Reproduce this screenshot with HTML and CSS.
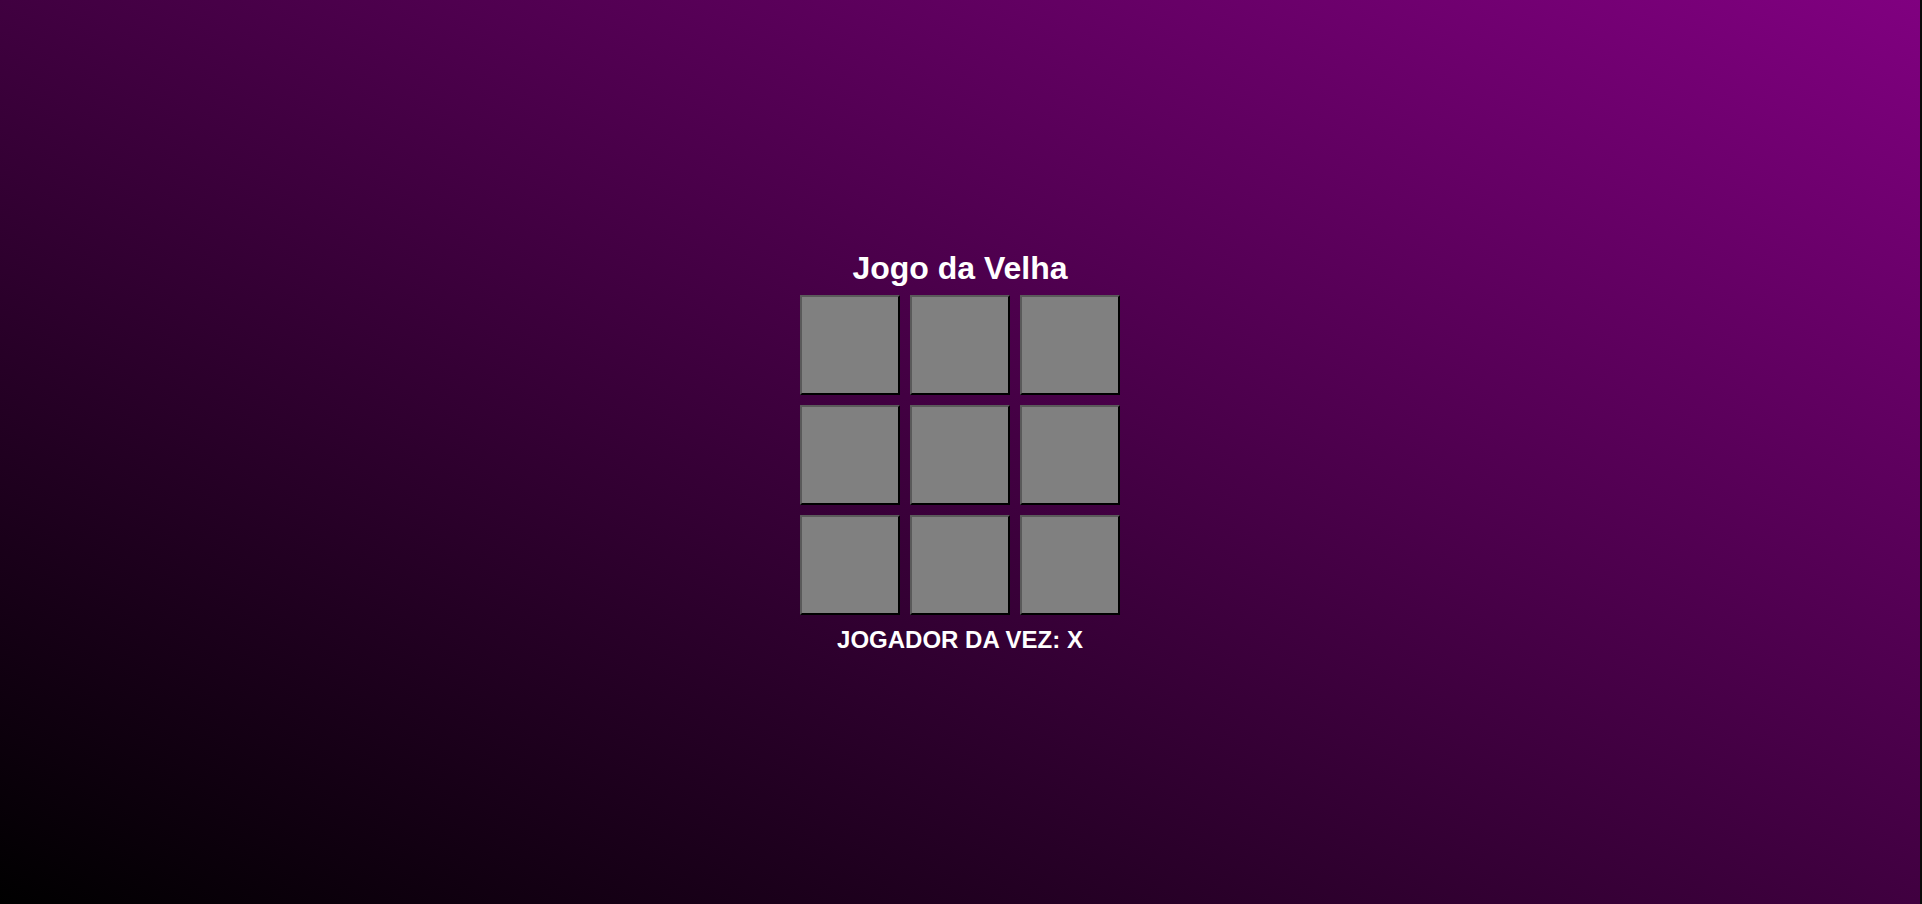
FILE: index.html
```html
<!DOCTYPE html>
<html lang="pt-BR">
<head>
<meta charset="utf-8">
<title>Jogo da Velha</title>
<link rel="stylesheet" href="styles.css">
</head>
<body>
<main class="game">
  <h1 class="title">Jogo da Velha</h1>
  <div class="board">
    <button class="cell"></button>
    <button class="cell"></button>
    <button class="cell"></button>
    <button class="cell"></button>
    <button class="cell"></button>
    <button class="cell"></button>
    <button class="cell"></button>
    <button class="cell"></button>
    <button class="cell"></button>
  </div>
  <h2 class="status">JOGADOR DA VEZ: X</h2>
</main>
</body>
</html>
```
FILE: styles.css
```css
html {
  background: #0b0b0b;
}
body {
  margin: 0 2px 0 0;
  min-height: 100vh;
  background: linear-gradient(to top right, #000000, #800080);
  font-family: "Liberation Sans", Arial, sans-serif;
  color: #ffffff;
  display: flex;
  align-items: center;
  justify-content: center;
}
.game {
  display: flex;
  flex-direction: column;
  align-items: center;
}
.title {
  margin: 0 0 8px;
  font-size: 32px;
  font-weight: bold;
}
.board {
  display: grid;
  grid-template-columns: repeat(3, 100px);
  grid-auto-rows: 100px;
  gap: 10px;
}
.cell {
  box-sizing: border-box;
  width: 100px;
  height: 100px;
  margin: 0;
  padding: 0;
  background: #808080;
  border: 2px solid;
  border-color: #5a5a5a #000000 #000000 #5a5a5a;
}
.status {
  margin: 11px 0 0;
  font-size: 24px;
  font-weight: bold;
}
```
